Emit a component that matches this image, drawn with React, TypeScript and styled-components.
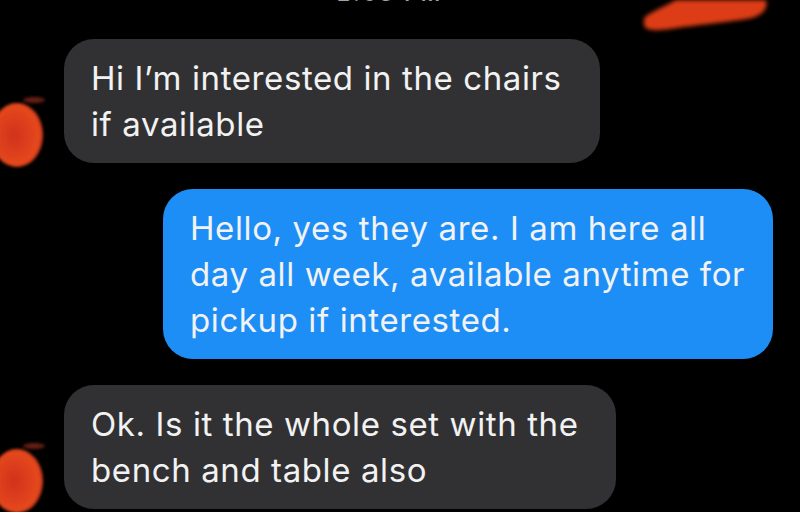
import React from 'react';
import styled, { createGlobalStyle } from 'styled-components';

const GlobalStyle = createGlobalStyle`
	html, body {
		margin: 0;
		padding: 0;
		background: #000;
		overflow: hidden;
	}
	body {
		width: 800px;
		height: 512px;
		font-family: Inter, "Noto Sans", sans-serif;
	}
`;

const Screen = styled.div`
	position: relative;
	width: 800px;
	height: 512px;
	background: #000;
	overflow: hidden;
	display: flex;
	flex-direction: column;
`;

const Timestamp = styled.div`
	height: 26px;
	margin-top: -19px;
	margin-bottom: 32px;
	text-align: center;
	font-size: 21px;
	line-height: 26px;
	font-weight: 600;
	letter-spacing: 3px;
	color: #a3a3a8;
	padding-right: 20px;
`;

const Thread = styled.div`
	display: flex;
	flex-direction: column;
	gap: 26px;
`;

const Row = styled.div<{ $outgoing?: boolean }>`
	display: flex;
	align-items: flex-end;
	justify-content: ${(p) => (p.$outgoing ? 'flex-end' : 'flex-start')};
	padding-right: ${(p) => (p.$outgoing ? '27px' : '0')};
	gap: 20px;
`;

const Avatar = styled.div`
	width: 44px;
	height: 76px;
	flex: none;
	margin-bottom: -8px;
`;

const Bubble = styled.div<{ $outgoing?: boolean; $width: number }>`
	box-sizing: border-box;
	width: ${(p) => p.$width}px;
	padding: 16px 20px 16px 27px;
	border-radius: 30px;
	background: ${(p) => (p.$outgoing ? '#1c8ef6' : '#313133')};
	color: #f2f2f2;
	font-size: 33px;
	line-height: 46px;
	letter-spacing: 0.6px;
`;

const Line = styled.span`
	display: block;
	white-space: nowrap;
`;

const Scribble = styled.svg`
	position: absolute;
	top: 0;
	left: 636px;
	pointer-events: none;
`;

const RedBlob = ({ id }: { id: string }) => (
	<svg width="46" height="76" viewBox="0 0 46 76">
		<defs>
			<filter id={id} x="-50%" y="-50%" width="200%" height="200%">
				<feGaussianBlur stdDeviation="1.8" />
			</filter>
			<radialGradient id={`${id}g`} cx="0.45" cy="0.5" r="0.55">
				<stop offset="0" stopColor="#d0321a" />
				<stop offset="0.85" stopColor="#e5481f" />
				<stop offset="1" stopColor="#c6361a" />
			</radialGradient>
		</defs>
		<g filter={`url(#${id})`}>
			<ellipse cx="17" cy="40" rx="26" ry="32" fill={`url(#${id}g)`} />
			<ellipse cx="34" cy="5" rx="11" ry="3" fill="#a8321c" opacity="0.6" />
		</g>
	</svg>
);

const messages = [
	{ outgoing: false, width: 536, lines: ['Hi I\u2019m interested in the chairs', 'if available'] },
	{
		outgoing: true,
		width: 610,
		lines: ['Hello, yes they are. I am here all', 'day all week, available anytime for', 'pickup if interested.'],
	},
	{ outgoing: false, width: 552, lines: ['Ok. Is it the whole set with the', 'bench and table also'] },
];

export default function App() {
	return (
		<Screen>
			<GlobalStyle />
			<Timestamp>2:03 PM</Timestamp>
			<Thread>
				{messages.map((m, i) => (
					<Row key={i} $outgoing={m.outgoing}>
						{!m.outgoing && (
							<Avatar>
								<RedBlob id={`blob${i}`} />
							</Avatar>
						)}
						<Bubble $outgoing={m.outgoing} $width={m.width}>
							{m.lines.map((l) => (
								<Line key={l}>{l}</Line>
							))}
						</Bubble>
					</Row>
				))}
			</Thread>
			<Scribble width="140" height="36" viewBox="0 0 140 36">
				<defs>
					<filter id="sblur" x="-20%" y="-50%" width="140%" height="200%">
						<feGaussianBlur stdDeviation="2" />
					</filter>
				</defs>
				<path
					d="M8 24 C 8 31, 20 31, 34 29 C 60 25, 95 22, 116 18 C 128 14, 132 8, 130 0 L 40 0 C 30 6, 14 12, 8 18 Z"
					fill="#dc3c19"
					filter="url(#sblur)"
				/>
			</Scribble>
		</Screen>
	);
}
